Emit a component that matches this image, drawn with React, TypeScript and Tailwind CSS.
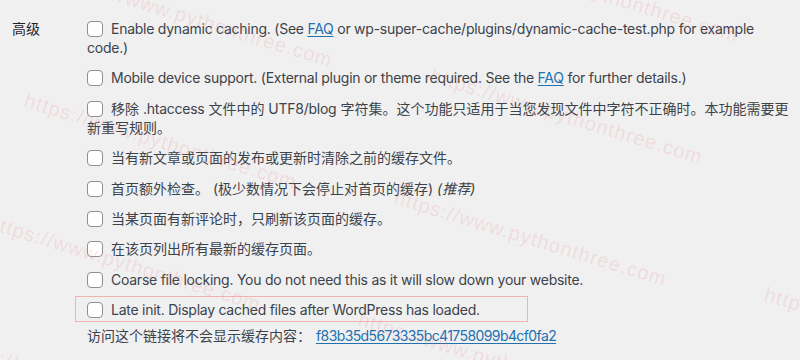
import React from 'react';

const font = { fontFamily: 'Inter, "Noto Sans CJK SC", sans-serif' };

const watermarks: [number, number][] = [
  [64, -32],
  [470, -57],
  [28, 90],
  [434, 65],
  [-8, 212],
  [398, 187],
  [-44, 334],
  [362, 309],
  [768, 284],
];

function Checkbox() {
  return (
    <span className="mr-2 inline-block h-4 w-4 rounded-[4px] border border-[#8c8f94] bg-white align-[-3px]" />
  );
}

function Faq() {
  return <a className="text-[#2271b1] underline underline-offset-2">FAQ</a>;
}

function Latin({ children }: { children: React.ReactNode }) {
  return <span className="tracking-[-0.25px]">{children}</span>;
}

const options: React.ReactNode[] = [
  <Latin>
    Enable dynamic caching. (See <Faq /> or wp-super-cache/plugins/dynamic-cache-test.php for example code.)
  </Latin>,
  <Latin>
    Mobile device support. (External plugin or theme required. See the <Faq /> for further details.)
  </Latin>,
  <>
    移除 <Latin>.htaccess</Latin> 文件中的 <Latin>UTF8/blog</Latin> 字符集。这个功能只适用于当您发现文件中字符不正确时。本功能需要更新重写规则。
  </>,
  <>当有新文章或页面的发布或更新时清除之前的缓存文件。</>,
  <>
    首页额外检查。 (极少数情况下会停止对首页的缓存) <em>(推荐)</em>
  </>,
  <>当某页面有新评论时，只刷新该页面的缓存。</>,
  <>在该页列出所有最新的缓存页面。</>,
  <Latin>Coarse file locking. You do not need this as it will slow down your website.</Latin>,
];

export default function App() {
  return (
    <div
      className="relative h-[360px] w-[800px] overflow-hidden bg-[#f0f0f1] text-[14px] text-[#3c434a]"
      style={font}
    >
      <div className="flex pt-[19px]">
        <div className="w-[87px] shrink-0 pl-3 leading-[19px] text-[#1d2327]">高级</div>
        <div className="flex w-[706px] flex-col gap-[11.4px] leading-[19px]">
          {options.map((content, i) => (
            <label key={i} className="block">
              <Checkbox />
              {content}
            </label>
          ))}
          <div className="relative">
            <label className="block">
              <Checkbox />
              <Latin>Late init. Display cached files after WordPress has loaded.</Latin>
            </label>
            <div className="absolute -top-[4px] -left-3 h-[26px] w-[453px] border border-[#f3b3ad]" />
          </div>
          <div className="-mt-[5px]">
            访问这个链接将不会显示缓存内容：
            <a className="ml-[5px] tracking-[-0.6px] text-[#2271b1] underline underline-offset-2">
              f83b35d5673335bc41758099b4cf0fa2
            </a>
          </div>
        </div>
      </div>

      <div className="pointer-events-none absolute inset-0">
        {watermarks.map(([x, y], i) => (
          <span
            key={i}
            className="absolute origin-top-left rotate-[17deg] whitespace-nowrap text-[20px] leading-none tracking-[1px] text-[rgba(236,110,110,0.16)]"
            style={{ left: x, top: y, fontFamily: '"Liberation Sans", sans-serif' }}
          >
            https://www.pythonthree.com
          </span>
        ))}
      </div>
    </div>
  );
}
